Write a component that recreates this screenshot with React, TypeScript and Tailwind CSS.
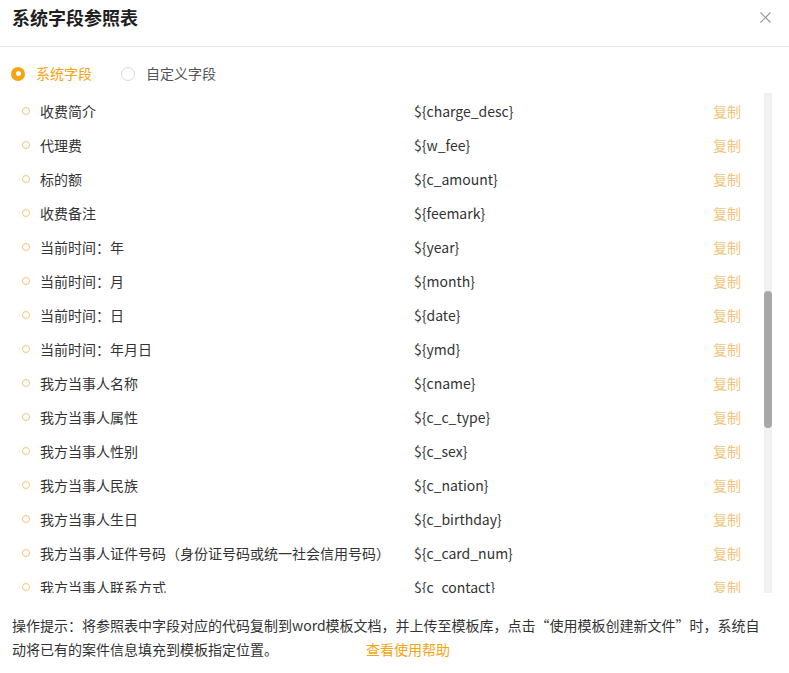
// 系统字段参照表 dialog

import { useState } from 'react';

const FIELDS = [
  { label: '收费简介', code: '${charge_desc}' },
  { label: '代理费', code: '${w_fee}' },
  { label: '标的额', code: '${c_amount}' },
  { label: '收费备注', code: '${feemark}' },
  { label: '当前时间：年', code: '${year}' },
  { label: '当前时间：月', code: '${month}' },
  { label: '当前时间：日', code: '${date}' },
  { label: '当前时间：年月日', code: '${ymd}' },
  { label: '我方当事人名称', code: '${cname}' },
  { label: '我方当事人属性', code: '${c_c_type}' },
  { label: '我方当事人性别', code: '${c_sex}' },
  { label: '我方当事人民族', code: '${c_nation}' },
  { label: '我方当事人生日', code: '${c_birthday}' },
  { label: '我方当事人证件号码（身份证号码或统一社会信用号码）', code: '${c_card_num}' },
  { label: '我方当事人联系方式', code: '${c_contact}' },
];

export default function App() {
  const [tab, setTab] = useState<'sys' | 'custom'>('sys');

  return (
    <div
      className="w-[789px] h-[673px] bg-white text-[#333] text-[14px] overflow-hidden"
      style={{ fontFamily: '"Noto Sans CJK SC", "Liberation Sans", sans-serif' }}
    >
      {/* Header */}
      <div className="h-[47px] border-b border-[#e8e8e8] flex items-start justify-between pl-[12px] pr-[18px] pt-[5px]">
        <h1 className="text-[18px] leading-[24px] font-bold text-[#1f1f1f]">系统字段参照表</h1>
        <button className="mt-[7px] text-[#999] cursor-pointer" aria-label="close">
          <svg width="11" height="11" viewBox="0 0 11 11" fill="none" stroke="currentColor" strokeWidth="1.2">
            <path d="M0.5 0.5l10 10M10.5 0.5l-10 10" />
          </svg>
        </button>
      </div>

      {/* Radio tabs */}
      <div className="h-[46px] flex items-center pl-[11px] gap-[29px] pt-[7px]">
        <button onClick={() => setTab('sys')} className="flex items-center gap-[11px] cursor-pointer">
          <span
            className={`w-[14px] h-[14px] rounded-full flex items-center justify-center ${
              tab === 'sys' ? 'bg-[#f5a30f]' : 'border border-[#d9d9d9]'
            }`}
          >
            {tab === 'sys' && <span className="w-[5px] h-[5px] rounded-full bg-white" />}
          </span>
          <span className={tab === 'sys' ? 'text-[#f5a30f]' : 'text-[#555]'}>系统字段</span>
        </button>
        <button onClick={() => setTab('custom')} className="flex items-center gap-[11px] cursor-pointer">
          <span
            className={`w-[14px] h-[14px] rounded-full flex items-center justify-center ${
              tab === 'custom' ? 'bg-[#f5a30f]' : 'border border-[#d9d9d9]'
            }`}
          >
            {tab === 'custom' && <span className="w-[5px] h-[5px] rounded-full bg-white" />}
          </span>
          <span className={tab === 'custom' ? 'text-[#f5a30f]' : 'text-[#555]'}>自定义字段</span>
        </button>
      </div>

      {/* Field list with scrollbar */}
      <div className="flex h-[500px]">
        <div className="flex-1 overflow-hidden pt-[1px]">
          {FIELDS.map((f) => (
            <div key={f.code} className="h-[34px] flex items-center">
              <span className="ml-[22px] w-[8px] h-[8px] rounded-full border border-[#f3c47c]" />
              <span className="ml-[10px] w-[374px] text-[#333] whitespace-nowrap">{f.label}</span>
              <span className="w-[299px] text-[#333]">{f.code}</span>
              <button className="text-[#f3c37a] cursor-pointer">复制</button>
            </div>
          ))}
        </div>
        <div className="w-[8px] mr-[17px] bg-[#f1f1f1] pt-[198px]">
          <div className="h-[137px] rounded-full bg-[#a8a8a8]" />
        </div>
      </div>

      {/* Footer hint */}
      <p className="pl-[12px] pr-[24px] pt-[20px] leading-[24px] text-[#333]">
        操作提示：将参照表中字段对应的代码复制到word模板文档，并上传至模板库，点击“使用模板创建新文件”时，系统自动将已有的案件信息填充到模板指定位置。
        <a className="ml-[88px] text-[#f5a30f] cursor-pointer">查看使用帮助</a>
      </p>
    </div>
  );
}
